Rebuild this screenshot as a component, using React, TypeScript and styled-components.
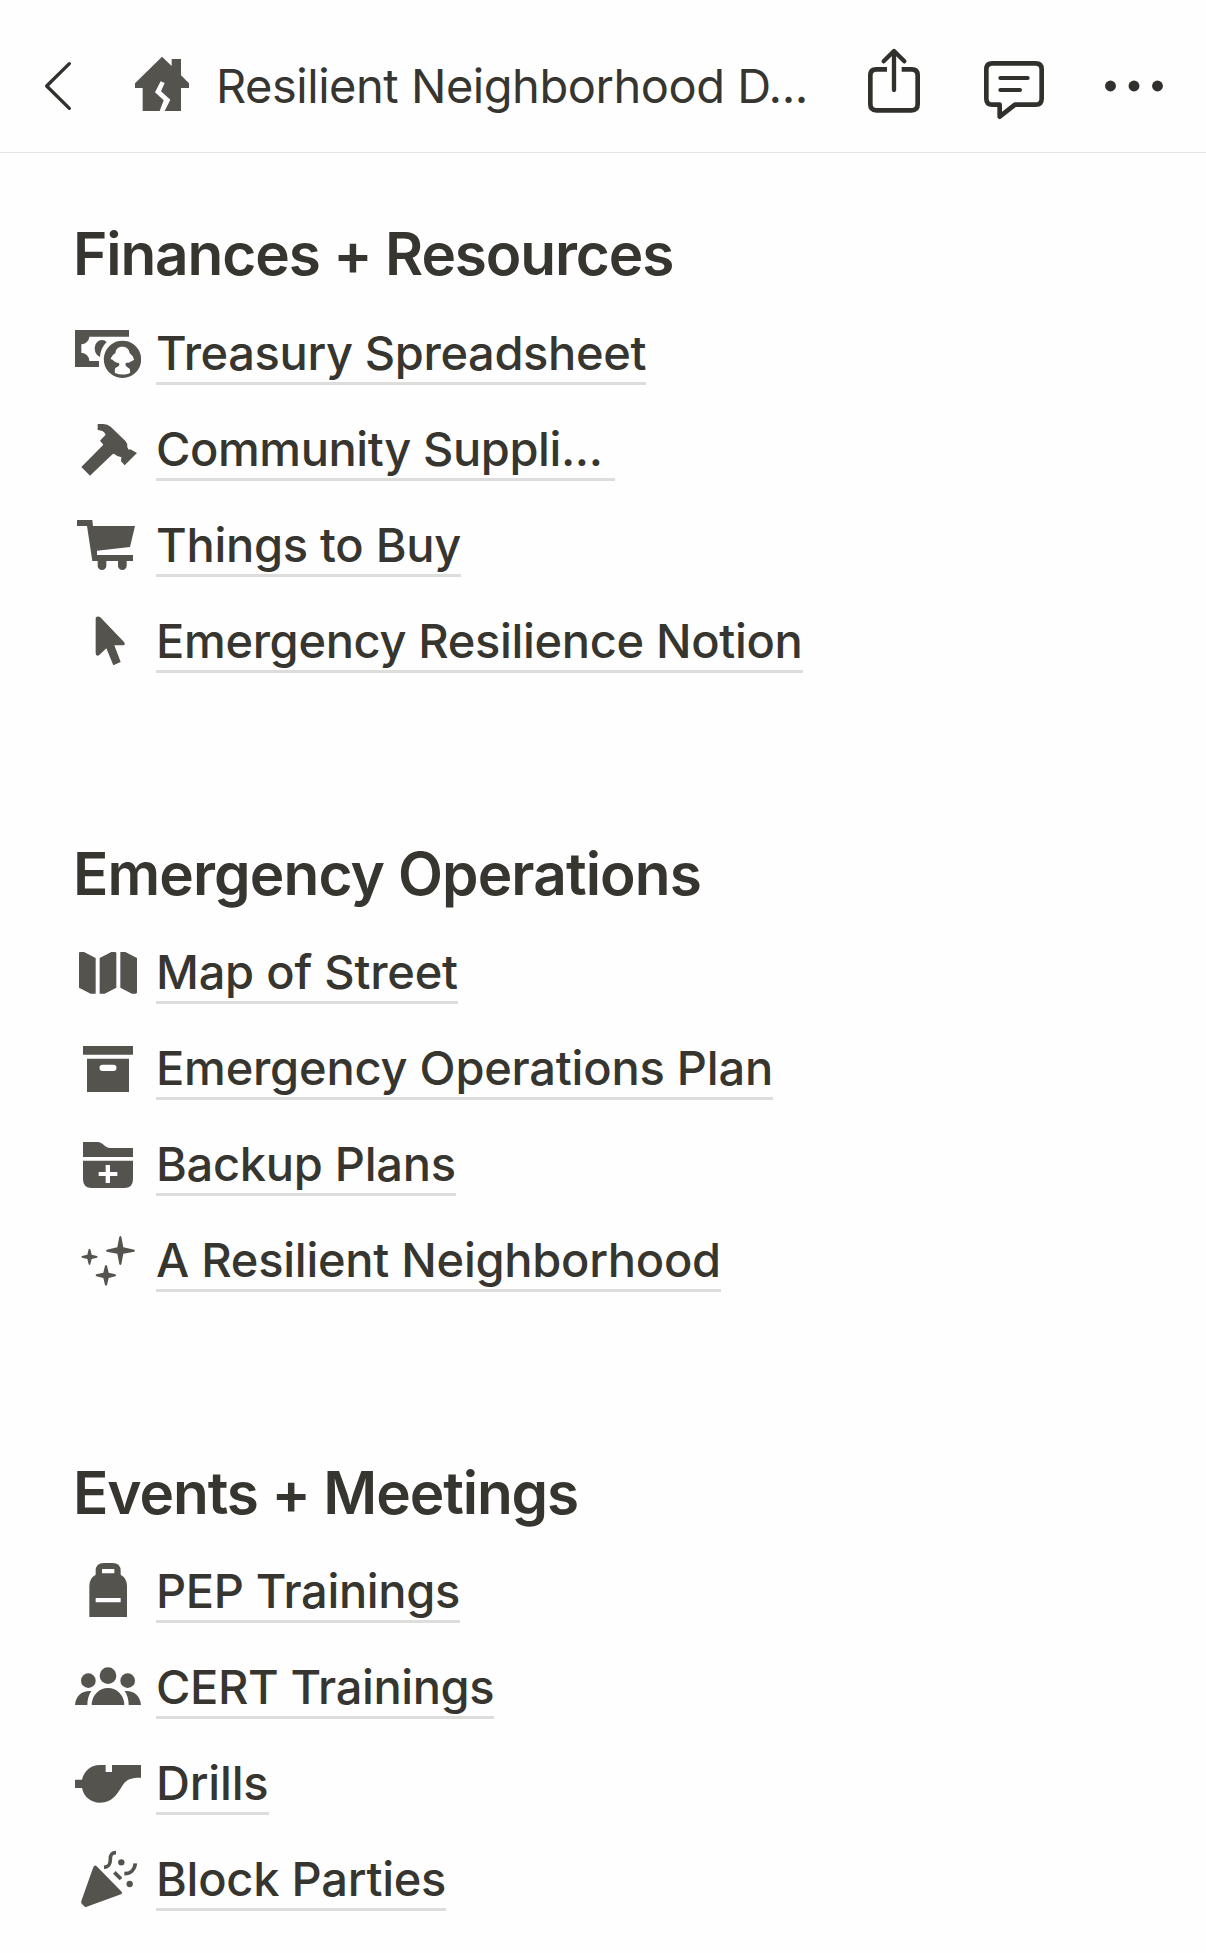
import React from "react";
import styled, { createGlobalStyle } from "styled-components";

const ink = "#37352f";
const iconInk = "#55534e";

const GlobalStyle = createGlobalStyle`
  *, *::before, *::after { box-sizing: border-box; }
  body { margin: 0; background: #fefefe; color: ${ink}; font-family: Inter, "Liberation Sans", sans-serif; }
`;

const Page = styled.div`
  width: 1206px;
  height: 1953px;
  overflow: hidden;
  background: #fefefe;
`;

const TopBar = styled.header`
  display: flex;
  align-items: center;
  height: 153px;
  padding: 20px 38px 0 39px;
  border-bottom: 1px solid #e4e4e4;
`;

const BarIcon = styled.svg<{ $w: number; $gap: number }>`
  flex: none;
  width: ${(p) => p.$w}px;
  height: 80px;
  margin-right: ${(p) => p.$gap}px;
  color: #32302c;
`;

const Title = styled.h1`
  flex: none;
  width: 648px;
  margin: 0;
  font-size: 47px;
  line-height: 60px;
  font-weight: 400;
  letter-spacing: -0.47px;
  white-space: nowrap;
`;

const Content = styled.main`
  display: flex;
  flex-direction: column;
  padding: 72px 74px 0;
`;

const Section = styled.section`
  height: 619px;
`;

const Heading = styled.h2<{ $ls: number }>`
  width: max-content;
  margin: 0 0 21px -1px;
  font-size: 58.5px;
  line-height: 60px;
  font-weight: 600;
  letter-spacing: ${(p) => p.$ls}px;
  white-space: nowrap;

  ${Section}:first-child & {
    margin-bottom: 23px;
    line-height: 58px;
  }
`;

const List = styled.ul`
  margin: 0;
  padding: 0;
  list-style: none;
`;

const Row = styled.li`
  display: flex;
  align-items: center;
  gap: 15px;
  height: 96px;
  padding-left: 1px;
`;

const RowIcon = styled.svg`
  flex: none;
  width: 66px;
  height: 66px;
  fill: ${iconInk};
`;

const Link = styled.a<{ $ls: number; $w: number }>`
  display: block;
  width: ${(p) => p.$w}px;
  height: 62px;
  border-bottom: 3px solid #dddddc;
  font-size: 47px;
  line-height: 60px;
  font-weight: 500;
  letter-spacing: ${(p) => p.$ls}px;
  white-space: nowrap;
`;

type Item = { label: string; ls: number; w: number; box: string; icon: React.ReactNode };
type Group = { title: string; ls: number; items: Item[] };

const groups: Group[] = [
  {
    title: "Finances + Resources",
    ls: -1.13,
    items: [
      {
        label: "Treasury Spreadsheet",
        ls: -0.37,
        w: 490,
        box: "45 333 198 198",
        icon: (
          <>
            <path d="M45 360H207V380H88A25 25 0 0 1 64 403V428A25 25 0 0 1 88 453H117V471H45Z" />
            <path d="M140 396A22 26 0 1 0 120 441A68 68 0 0 1 140 396Z" />
            <path
              fillRule="evenodd"
              d="M187.500 392A56 56 0 1 1 187.400 392ZM187 410C174 410 167 418 166 430C159 434 154 440 152 448C159 448 161 455 168 457C171 460 176 457 178 461C179 467 176 470 166 474C164 480 164 485 165 489C180 495 196 495 210 489C211 484 210 480 209 476C198 470 195 466 197 460C203 456 207 460 211 455C217 453 219 451 222 449C220 440 215 434 209 430C208 418 200 410 187 410Z"
            />
          </>
        ),
      },
      {
        label: "Community Suppli...",
        ls: -0.42,
        w: 459,
        box: "45 621 198 198",
        icon: (
          <path d="M113 642H130Q143 642 152 650L197 694Q204 702 202 712L206 719L211 718L231 729L194 766L183 754L184 741Q174 742 164 733L160 731L155 735L90 797L64 771L130 704L120 692L137 674Q132 661 113 660Z" />
        ),
      },
      {
        label: "Things to Buy",
        ls: -0.28,
        w: 305,
        box: "45 69 198 198",
        icon: (
          <path d="M51 90H97L99 108H225L210 171L111 182V195H219V213H200V227A13 13 0 0 1 174 227V213H139V227A13 13 0 0 1 113 227V213H97L81 108H51Z" />
        ),
      },
      {
        label: "Emergency Resilience Notion",
        ls: -0.34,
        w: 647,
        box: "45 357 198 198",
        icon: (
          <path d="M107 386C107 379 115 377 121 382L192 456Q198 465 189 466H163L182 516L160 526L139 475L118 495Q108 501 107 490Z" />
        ),
      },
    ],
  },
  {
    title: "Emergency Operations",
    ls: -0.88,
    items: [
      {
        label: "Map of Street",
        ls: -0.23,
        w: 302,
        box: "45 300 198 198",
        icon: (
          <path d="M57 339Q57 336 61 336H72L107 354V461H92L57 443ZM119 354L154 336H165Q169 336 169 340V443L134 461H119ZM181 336H196L231 354V457Q231 461 227 461H216L181 443Z" />
        ),
      },
      {
        label: "Emergency Operations Plan",
        ls: -0.22,
        w: 617,
        box: "45 588 198 198",
        icon: (
          <path
            fillRule="evenodd"
            d="M69 618H219V644H69ZM81 656H207V756H81ZM128 674A9.500 9.500 0 0 0 128 693H160A9.500 9.500 0 0 0 160 674Z"
          />
        ),
      },
      {
        label: "Backup Plans",
        ls: -0.28,
        w: 300,
        box: "45 66 198 198",
        icon: (
          <path
            fillRule="evenodd"
            d="M69 96H113Q121 96 127 101L138 110Q144 114 152 114H219V141H69ZM69 152H219V208Q219 234 193 234H95Q69 234 69 208ZM137 165V186H116V198H137V219H150V198H172V186H150V165Z"
          />
        ),
      },
      {
        label: "A Resilient Neighborhood",
        ls: -0.27,
        w: 565,
        box: "45 354 198 198",
        icon: (
          <>
            <path d="M178 380Q181 376 184 380L190 412L223 419Q227 422 223 425L190 431L184 463Q181 467 178 463L172 431L140 425Q136 422 140 419L172 412Z" />
            <path d="M86 418Q88.500 414 91 418L95 434L111 438Q115 440.500 111 443L95 447L91 463Q88.500 467 86 463L82 447L66 443Q62 440.500 66 438L82 434Z" />
            <path d="M135 467Q138 463 141 467L146 488L166 493Q170 496 166 499L146 504L141 525Q138 529 135 525L130 504L109 499Q105 496 109 493L130 488Z" />
          </>
        ),
      },
    ],
  },
  {
    title: "Events + Meetings",
    ls: -1.1,
    items: [
      {
        label: "PEP Trainings",
        ls: -0.35,
        w: 304,
        box: "45 297 198 198",
        icon: (
          <path
            fillRule="evenodd"
            d="M107 344V333Q107 309 131 309H158Q182 309 182 333V344Q201 355 201 377V471H88V377Q88 355 107 344ZM126 327V340H163V327ZM107 414V427H182V414Z"
          />
        ),
      },
      {
        label: "CERT Trainings",
        ls: -0.4,
        w: 338,
        box: "45 585 198 198",
        icon: (
          <>
            <circle cx="144" cy="647" r="25" />
            <circle cx="85" cy="662" r="22" />
            <circle cx="203" cy="662" r="22" />
            <path d="M95 735A49 51 0 0 1 193 735ZM45 735C47 707 66 691 94 693C86 705 82 719 82 735ZM243 735C241 707 222 691 194 693C202 705 206 719 206 735Z" />
          </>
        ),
      },
      {
        label: "Drills",
        ls: -0.18,
        w: 113,
        box: "45 63 198 198",
        icon: (
          <path d="M45 149H66C72 123 93 105 120 105H137V126H156V105H243V143C212 143 200 148 188 166C173 190 159 218 120 218C92 218 71 200 66 174H45Z" />
        ),
      },
      {
        label: "Block Parties",
        ls: -0.25,
        w: 290,
        box: "45 351 198 198",
        icon: (
          <>
            <path d="M102 409Q106 404 110 409L185 485Q189 490 183 493L80 530Q75 532 72 528L66 522Q62 519 64 513L99 414Z" />
            <circle cx="184" cy="397" r="9.500" />
            <circle cx="209" cy="462" r="9.500" />
            <path
              d="M168 368C153 368 151 376 151 388C151 402 148 411 132 412M226 400C224 419 212 431 193 431M163 427L183 447"
              fill="none"
              stroke={iconInk}
              strokeWidth="11"
            />
          </>
        ),
      },
    ],
  },
];

export default function App() {
  return (
    <>
      <GlobalStyle />
      <Page>
        <TopBar>
          <BarIcon $w={40} $gap={50} viewBox="117 48 120 240" aria-label="Back">
            <path d="M208 101L140 168L208 235" fill="none" stroke="currentColor" strokeWidth="10" strokeLinecap="round" strokeLinejoin="round" />
          </BarIcon>
          <BarIcon $w={66} $gap={21} viewBox="387 48 198 240">
            <path
              fill={iconInk}
              d="M405 160L486 80L515 108V87H543V136L567 160V174H543V243H494L511 209L483 184L494 159L482 154L465 187L491 211L479 243H428V174H405Z"
            />
          </BarIcon>
          <Title>Resilient Neighborhood D...</Title>
          <BarIcon $w={60} $gap={58} viewBox="132 48 180 240" aria-label="Share">
            <g fill="none" stroke="currentColor" strokeWidth="14">
              <path d="M201 118H169Q151 118 151 136V223Q151 241 169 241H275Q293 241 293 223V136Q293 118 275 118H245" />
              <path d="M222 180V64M191 94L222 63L253 94" strokeWidth="13" strokeLinecap="round" strokeLinejoin="round" />
            </g>
          </BarIcon>
          <BarIcon $w={64} $gap={56} viewBox="486 48 192 240" aria-label="Comments">
            <g fill="none" stroke="currentColor" strokeWidth="14" strokeLinejoin="round" strokeLinecap="round">
              <path d="M517 100H647Q665 100 665 118V206Q665 224 647 224H585L539 260V224H517Q499 224 499 206V118Q499 100 517 100Z" />
              <path d="M541 144H623M541 180H600" strokeWidth="12" />
            </g>
          </BarIcon>
          <BarIcon $w={64} $gap={0} viewBox="846 48 192 240" aria-label="More">
            <g fill="currentColor">
              <circle cx="871.500" cy="168" r="16.300" />
              <circle cx="942" cy="168" r="16.300" />
              <circle cx="1012.500" cy="168" r="16.300" />
            </g>
          </BarIcon>
        </TopBar>
        <Content>
          {groups.map((g) => (
            <Section key={g.title}>
              <Heading $ls={g.ls}>{g.title}</Heading>
              <List>
                {g.items.map((it) => (
                  <Row key={it.label}>
                    <RowIcon viewBox={it.box} aria-hidden="true">
                      {it.icon}
                    </RowIcon>
                    <Link $ls={it.ls} $w={it.w}>
                      {it.label}
                    </Link>
                  </Row>
                ))}
              </List>
            </Section>
          ))}
        </Content>
      </Page>
    </>
  );
}
